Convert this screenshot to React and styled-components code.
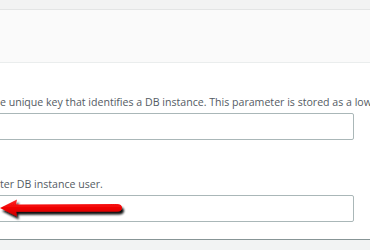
import styled, { createGlobalStyle } from "styled-components"

const GlobalStyle = createGlobalStyle`
  html, body {
    margin: 0;
    padding: 0;
    background: #ffffff;
    overflow: hidden;
  }
  body {
    font-family: "Open Sans", "Liberation Sans", sans-serif;
  }
`

const App = () => {
  return (
    <Page>
      <GlobalStyle />
      <TopBar />
      <HeaderBand />
      <Body>
        <Field>
          <Description>e unique key that identifies a DB instance. This parameter is stored as a lowercase string.</Description>
          <TextInput type="text" />
        </Field>
        <Field>
          <Description>ter DB instance user.</Description>
          <InputWrap>
            <TextInput type="text" />
            <Arrow />
          </InputWrap>
        </Field>
      </Body>
      <Footer />
    </Page>
  )
}

export default App

const Arrow = () => (
  <ArrowSvg width="130" height="30" viewBox="0 0 130 30">
    <defs>
      <linearGradient id="arrowRed" x1="0" y1="0" x2="0" y2="1">
        <stop offset="0" stopColor="#ff2a2a" />
        <stop offset="0.5" stopColor="#f00000" />
        <stop offset="1" stopColor="#c80000" />
      </linearGradient>
      <filter id="arrowShadow" x="-10%" y="-40%" width="130%" height="200%">
        <feGaussianBlur in="SourceAlpha" stdDeviation="1.2" />
        <feOffset dx="2" dy="2.5" result="blur" />
        <feComponentTransfer>
          <feFuncA type="linear" slope="0.95" />
        </feComponentTransfer>
        <feMerge>
          <feMergeNode />
          <feMergeNode in="SourceGraphic" />
        </feMerge>
      </filter>
    </defs>
    <g filter="url(#arrowShadow)">
      <path
        d="M0 13 L17 4.5 L16 9.5 L117 9 Q122 9 122 12.8 Q122 16.5 117 16.5 L16 16.8 L17 21.5 Z"
        fill="url(#arrowRed)"
      />
    </g>
  </ArrowSvg>
)

const Page = styled.div`
  width: 370px;
  height: 250px;
  display: flex;
  flex-direction: column;
  background: #ffffff;
  overflow: hidden;
`

const TopBar = styled.div`
  height: 9px;
  flex-shrink: 0;
  background: #f2f3f3;
  border-bottom: 1px solid #e3e5e5;
`

const HeaderBand = styled.div`
  height: 52px;
  flex-shrink: 0;
  background: #fafafa;
  border-bottom: 1px solid #eaeded;
`

const Body = styled.div`
  flex: 1;
  display: flex;
  flex-direction: column;
  gap: 36px;
  padding: 31px 16px 0 0;
  margin-left: -6px;
`

const Field = styled.div`
  display: flex;
  flex-direction: column;
  gap: 3px;
`

const Description = styled.div`
  padding-left: 6px;
  font-size: 10.6px;
  line-height: 16px;
  color: #545b64;
  white-space: nowrap;
  overflow: hidden;
  width: 376px;
`

const InputWrap = styled.div`
  position: relative;
`

const TextInput = styled.input`
  display: block;
  box-sizing: border-box;
  width: 100%;
  height: 27px;
  margin: 0;
  border: 1px solid #aab7b8;
  border-radius: 2px;
  background: #ffffff;
  outline: none;
`

const ArrowSvg = styled.svg`
  position: absolute;
  left: 6px;
  top: 0px;
  overflow: visible;
`

const Footer = styled.div`
  height: 10px;
  flex-shrink: 0;
  background: #f2f3f3;
  border-top: 1px solid #879596;
`
